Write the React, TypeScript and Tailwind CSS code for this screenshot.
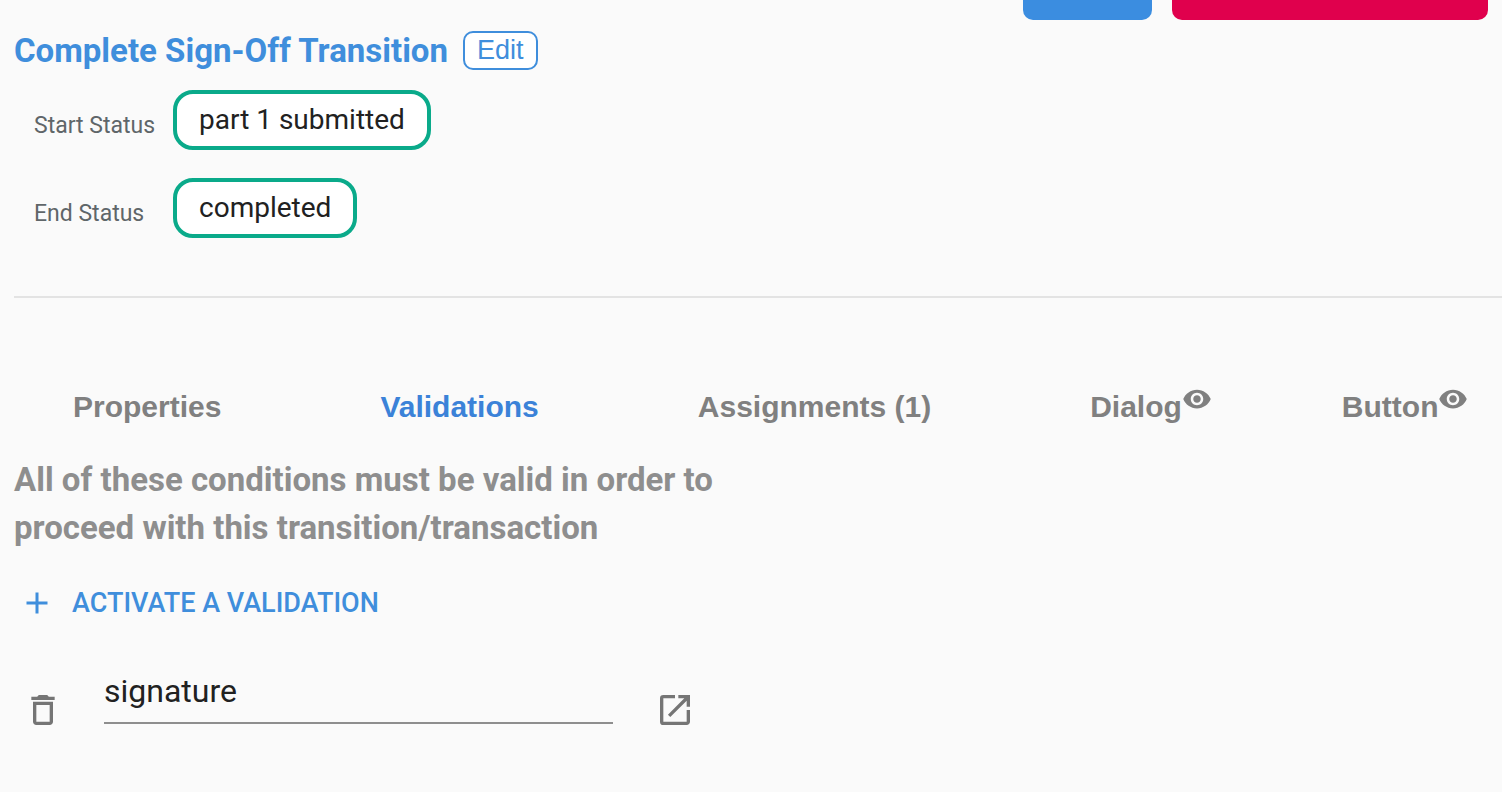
import { useState } from 'react'
import { MdAdd, MdDeleteOutline, MdOpenInNew, MdVisibility } from 'react-icons/md'

interface StatusRowProps {
  label: string
  status: string
}

interface TabButtonProps {
  label: string
  active: boolean
  preview?: boolean
  onSelect: (label: string) => void
}

function StatusRow({ label, status }: StatusRowProps) {
  return (
    <div className="flex h-[60px] items-center">
      <dt className="w-[139px] pt-[11px] text-[23px] leading-8 text-[#5f6669]">{label}</dt>
      <dd className="flex h-[60px] items-center rounded-[20px] border-4 border-[#0aaa8a] bg-white px-[22px] text-[28px] text-[#212121]">
        {status}
      </dd>
    </div>
  )
}

function TabButton({ label, active, preview, onSelect }: TabButtonProps) {
  return (
    <button
      type="button"
      role="tab"
      aria-selected={active}
      onClick={() => onSelect(label)}
      className={`flex items-start whitespace-nowrap font-['Liberation_Sans',Arial,sans-serif] text-[30px] font-bold leading-9 ${
        active ? 'text-[#3b82d8]' : 'text-[#808080]'
      }`}
    >
      {label}
      {preview && <MdVisibility className="-mt-[6px] h-8 w-[30px]" />}
    </button>
  )
}

export default function App() {
  const [tab, setTab] = useState('Validations')
  const [validation, setValidation] = useState('signature')

  return (
    <div className="min-h-screen overflow-x-hidden bg-[#fafafa] pl-[14px] font-[Roboto,sans-serif]">
      {/* Page actions */}
      <div className="flex justify-end gap-5 pr-[14px]">
        <button type="button" aria-label="Save" className="h-5 w-[129px] rounded-b-[10px] bg-[#3b8de0]" />
        <button type="button" aria-label="Delete" className="h-5 w-[316px] rounded-b-[10px] bg-[#e0004d]" />
      </div>

      <header className="flex items-center gap-[15px] pt-[11px]">
        <h1 className="text-[33px] font-bold leading-[39px] text-[#3f8edc]">Complete Sign-Off Transition</h1>
        <button
          type="button"
          className="flex h-[39px] items-start rounded-[10px] border-2 border-[#3f8edc] bg-white px-3 font-['Liberation_Sans',Arial,sans-serif] text-[27px] leading-[34px] text-[#3f8edc]"
        >
          Edit
        </button>
      </header>

      <dl className="flex flex-col gap-7 pl-5 pt-5">
        <StatusRow label="Start Status" status="part 1 submitted" />
        <StatusRow label="End Status" status="completed" />
      </dl>

      <hr className="mt-[58px] border-t-2 border-[#e3e3e3]" />

      {/* Tabs */}
      <div role="tablist" className="flex gap-[159px] pl-[59px] pt-[91px]">
        <TabButton label="Properties" active={tab === 'Properties'} onSelect={setTab} />
        <TabButton label="Validations" active={tab === 'Validations'} onSelect={setTab} />
        <TabButton label="Assignments (1)" active={tab === 'Assignments (1)'} onSelect={setTab} />
        <div className="flex gap-[130px]">
          <TabButton label="Dialog" preview active={tab === 'Dialog'} onSelect={setTab} />
          <TabButton label="Button" preview active={tab === 'Button'} onSelect={setTab} />
        </div>
      </div>

      <section className="max-w-[730px]">
        <p className="pt-[31px] text-[33px] font-bold leading-12 text-[#8e8e8e]">
          All of these conditions must be valid in order to proceed with this transition/transaction
        </p>

        <button type="button" className="mt-[33px] flex items-center gap-[17px] pl-[5px] text-[27px] font-medium leading-9 text-[#3f8edc]">
          <MdAdd className="size-9" />
          ACTIVATE A VALIDATION
        </button>

        <div className="flex items-end pt-[47px]">
          <button type="button" aria-label="Remove validation" className="ml-[9px] text-[#757575]">
            <MdDeleteOutline className="size-10" />
          </button>
          <input
            type="text"
            aria-label="Validation name"
            value={validation}
            onChange={(e) => setValidation(e.target.value)}
            className="mb-[6px] ml-[41px] h-[56px] w-[509px] border-b-2 border-[#8e8e8e] bg-transparent pb-2 text-[32px] text-[#212121] outline-none"
          />
          <button type="button" aria-label="Open validation" className="ml-[42px] text-[#757575]">
            <MdOpenInNew className="size-10" />
          </button>
        </div>
      </section>
    </div>
  )
}
